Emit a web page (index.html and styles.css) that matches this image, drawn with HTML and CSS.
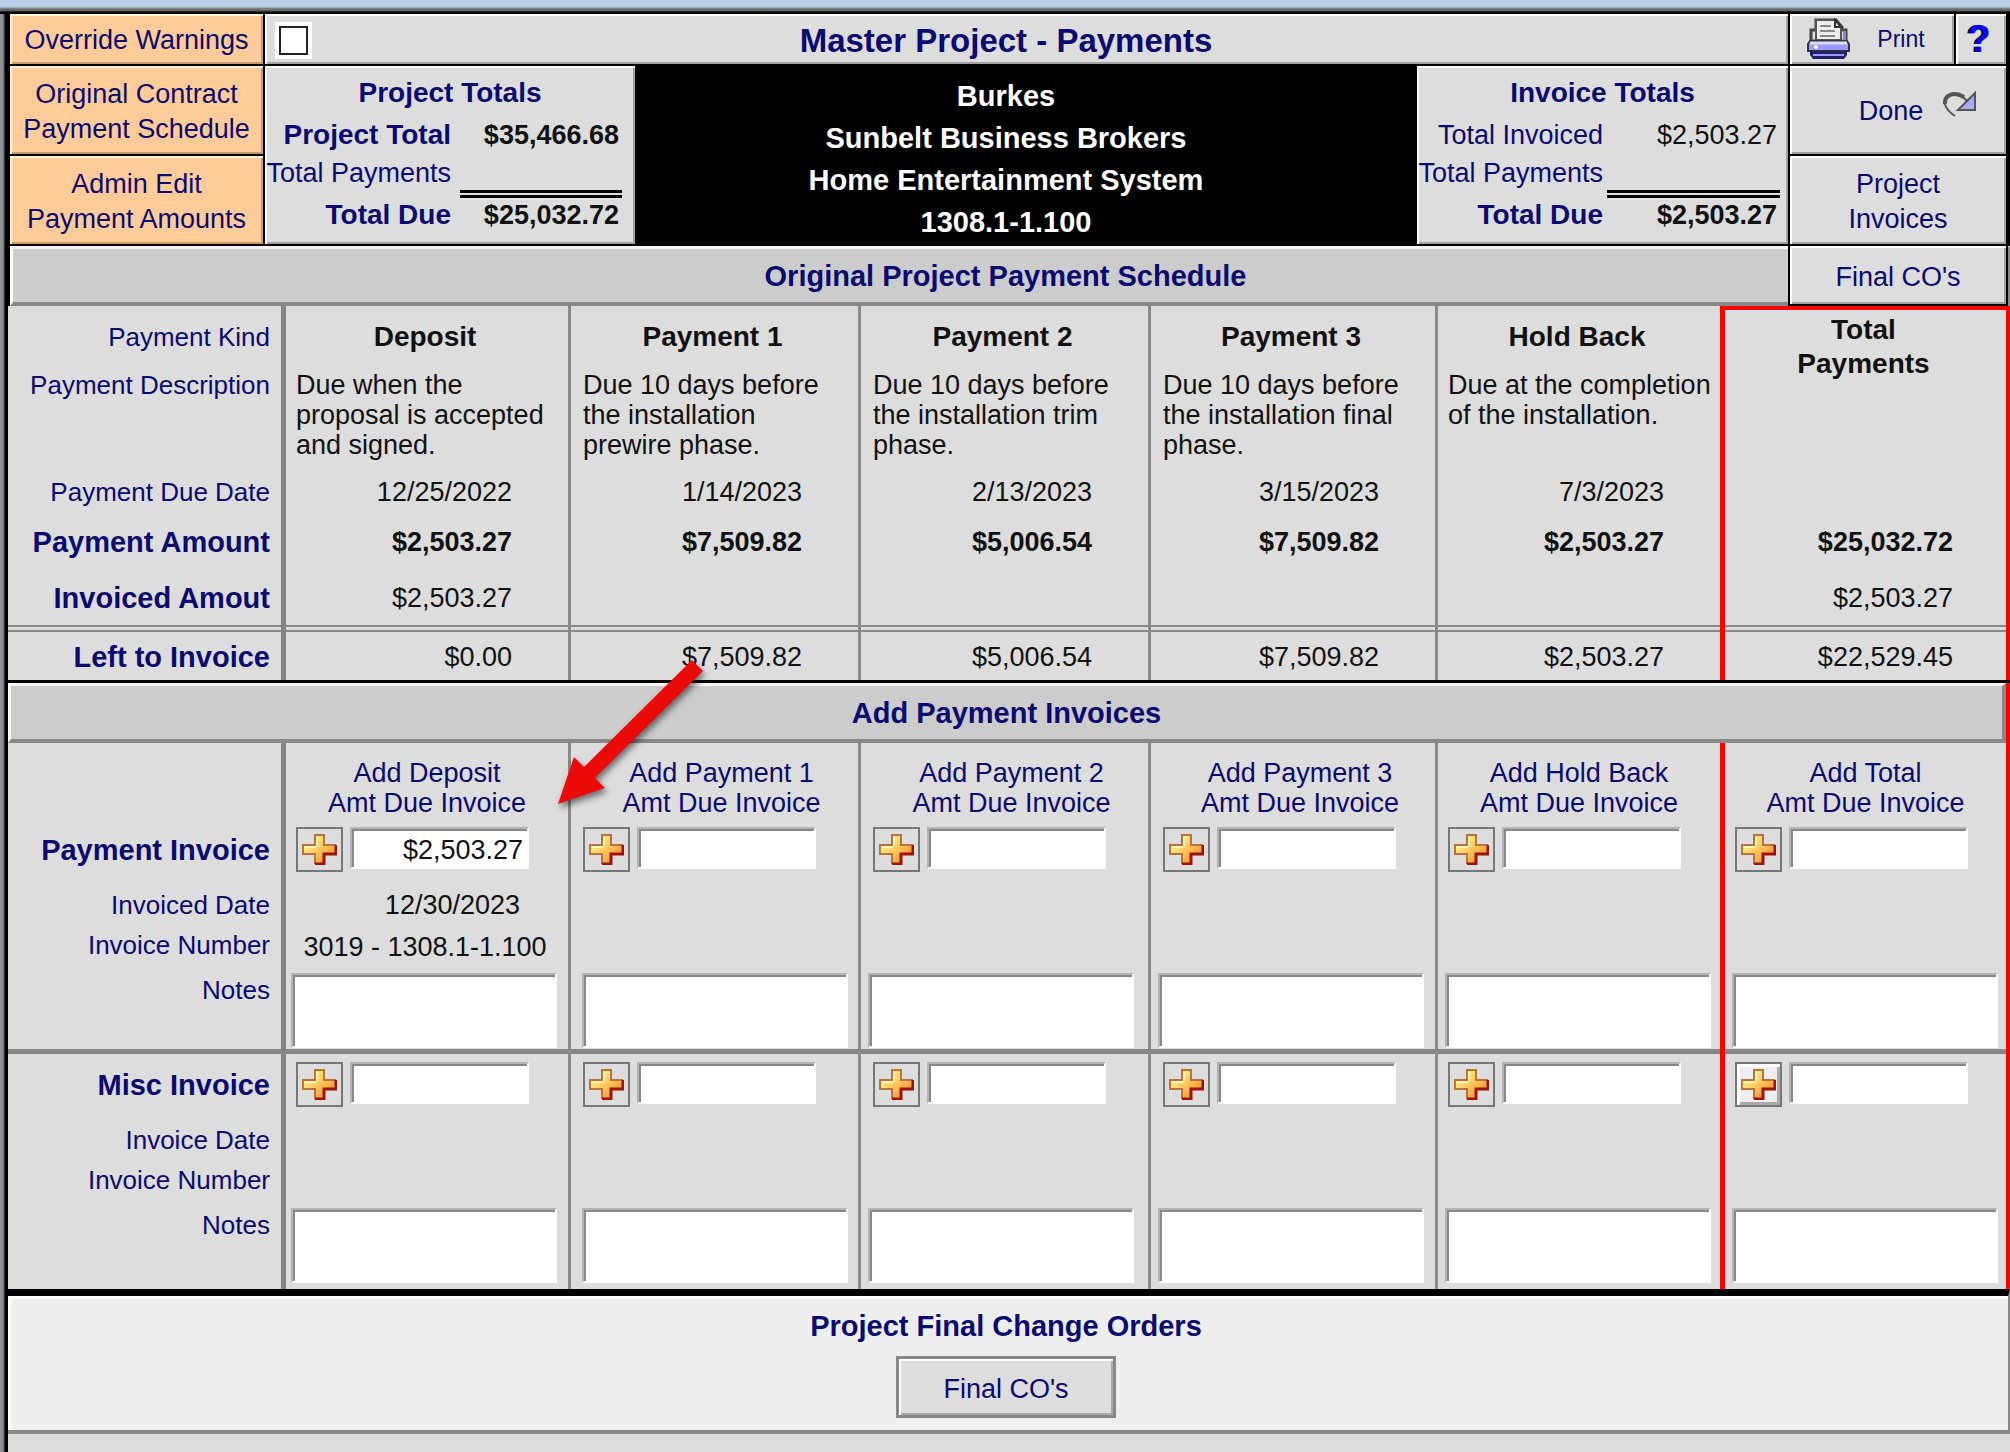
FILE: index.html
```html
<!DOCTYPE html>
<html lang="en">
<head>
<meta charset="utf-8">
<title>Master Project - Payments</title>
<link rel="stylesheet" href="styles.css">
</head>
<body>
<svg class="defs" aria-hidden="true">
  <defs>
    <linearGradient id="gold" x1="0" y1="0" x2="1" y2="1">
      <stop offset="0.2" stop-color="#fff08a"/>
      <stop offset="0.55" stop-color="#fbbf52"/>
      <stop offset="0.85" stop-color="#e8923a"/>
    </linearGradient>
    <symbol id="plus" viewBox="0 0 35 31">
      <path d="M13 1h9v10h12v9H22v10h-9V20H1v-9h12z" fill="url(#gold)"/>
      <path d="M13 30V20H1v-9h12V1h9v10h12" fill="none" stroke="#b9733a" stroke-width="2"/>
      <path d="M34 11v9H22v10h-9" fill="none" stroke="#a01208" stroke-width="3"/>
      <path d="M15 12V3M3 13h11" fill="none" stroke="#fff6b8" stroke-width="2"/>
    </symbol>
  </defs>
</svg>
<div class="window">
  <header class="top">
    <label class="cell orange" for="override">Override Warnings</label>
    <div class="cell titlebar">
      <input class="check" type="checkbox" id="override">
      <h1>Master Project - Payments</h1>
    </div>
    <button class="cell print" type="button">
      <svg width="43" height="42" viewBox="0 0 43 42" aria-hidden="true">
        <path d="M4 23V12h5V2h20l6 7v3h4v11z" fill="#ddd" stroke="#444" stroke-width="3"/>
        <path d="M9 22V2h19l6 7v13z" fill="#eee" stroke="#555" stroke-width="2"/>
        <path d="M28 2v7h6z" fill="#fff" stroke="#333" stroke-width="2"/>
        <path d="M13 8h11M13 13h15M13 18h15" stroke="#888" stroke-width="2"/>
        <path d="M36 13h3v9h-3z" fill="#88d"/>
        <path d="M3 23h37l2 3v7H1v-7z" fill="#99f" stroke="#334" stroke-width="2"/>
        <path d="M3 25h37" stroke="#ddf" stroke-width="3"/>
        <circle cx="9" cy="29" r="2" fill="#ffd"/>
        <path d="M3 33h37v4l-3 4H6l-3-4z" fill="#226"/>
        <path d="M6 37h31" stroke="#99f" stroke-width="2"/>
      </svg>
      Print
    </button>
    <button class="cell help" type="button">?</button>

    <button class="cell orange contract" type="button">Original Contract<br>Payment Schedule</button>
    <button class="cell orange admin" type="button">Admin Edit<br>Payment Amounts</button>
    <section class="cell totals project-totals">
      <h2>Project Totals</h2>
      <dl>
        <dt class="strong">Project Total</dt><dd class="strong">$35,466.68</dd>
        <dt>Total Payments</dt><dd class="rule"></dd>
        <dt class="strong">Total Due</dt><dd class="strong">$25,032.72</dd>
      </dl>
    </section>
    <div class="client">
      <div>Burkes</div>
      <div>Sunbelt Business Brokers</div>
      <div>Home Entertainment System</div>
      <div>1308.1-1.100</div>
    </div>
    <section class="cell totals invoice-totals">
      <h2>Invoice Totals</h2>
      <dl>
        <dt>Total Invoiced</dt><dd>$2,503.27</dd>
        <dt>Total Payments</dt><dd class="rule"></dd>
        <dt class="strong">Total Due</dt><dd class="strong">$2,503.27</dd>
      </dl>
    </section>
    <button class="cell done" type="button">Done
      <svg width="35" height="27" viewBox="0 0 35 27" aria-hidden="true">
        <path d="M13 25C5 20 0 12 4 6 9 1 17 1 25 10" fill="none" stroke="#555" stroke-width="2"/>
        <path d="M3 13C2 4 12 0 22 6" fill="none" stroke="#555" stroke-width="4"/>
        <path d="M33 2v17H16l8-8z" fill="#aaf" stroke="#555" stroke-width="2"/>
      </svg>
    </button>
    <button class="cell invoices" type="button">Project<br>Invoices</button>
    <h2 class="band schedule-band">Original Project Payment Schedule</h2>
    <button class="cell final" type="button">Final CO's</button>
  </header>

  <table class="grid">
    <colgroup><col class="c-label"><col class="c-dep"><col class="c-p1"><col class="c-p2"><col class="c-p3"><col class="c-hb"><col class="c-total"></colgroup>
    <tr class="kind">
      <th scope="row">Payment Kind</th>
      <th scope="col">Deposit</th><th scope="col">Payment 1</th><th scope="col">Payment 2</th><th scope="col">Payment 3</th><th scope="col">Hold Back</th>
      <th scope="col" rowspan="2" class="total-head">Total<br>Payments</th>
    </tr>
    <tr class="desc">
      <th scope="row">Payment Description</th>
      <td>Due when the<br>proposal is accepted<br>and signed.</td>
      <td>Due 10 days before<br>the installation<br>prewire phase.</td>
      <td>Due 10 days before<br>the installation trim<br>phase.</td>
      <td>Due 10 days before<br>the installation final<br>phase.</td>
      <td>Due at the completion<br>of the installation.</td>
    </tr>
    <tr class="due">
      <th scope="row">Payment Due Date</th>
      <td>12/25/2022</td><td>1/14/2023</td><td>2/13/2023</td><td>3/15/2023</td><td>7/3/2023</td><td></td>
    </tr>
    <tr class="amount strong">
      <th scope="row">Payment Amount</th>
      <td>$2,503.27</td><td>$7,509.82</td><td>$5,006.54</td><td>$7,509.82</td><td>$2,503.27</td><td>$25,032.72</td>
    </tr>
    <tr class="invoiced">
      <th scope="row" class="strong">Invoiced Amout</th>
      <td>$2,503.27</td><td></td><td></td><td></td><td></td><td>$2,503.27</td>
    </tr>
    <tr class="left">
      <th scope="row" class="strong">Left to Invoice</th>
      <td>$0.00</td><td>$7,509.82</td><td>$5,006.54</td><td>$7,509.82</td><td>$2,503.27</td><td>$22,529.45</td>
    </tr>
  </table>

  <div class="band-row"><h2 class="band">Add Payment Invoices</h2></div>

  <table class="grid entry">
    <colgroup><col class="c-label"><col class="c-dep"><col class="c-p1"><col class="c-p2"><col class="c-p3"><col class="c-hb"><col class="c-total"></colgroup>
    <tr class="add">
      <td></td>
      <th scope="col">Add Deposit<br>Amt Due Invoice</th>
      <th scope="col" class="shift">Add Payment 1<br>Amt Due Invoice</th>
      <th scope="col" class="shift">Add Payment 2<br>Amt Due Invoice</th>
      <th scope="col" class="shift">Add Payment 3<br>Amt Due Invoice</th>
      <th scope="col">Add Hold Back<br>Amt Due Invoice</th>
      <th scope="col">Add Total<br>Amt Due Invoice</th>
    </tr>
    <tr class="pay">
      <th scope="row" class="strong">Payment Invoice</th>
      <td><div class="field"><button class="plus" type="button" aria-label="Add deposit invoice"><svg><use href="#plus"/></svg></button><input type="text" aria-label="Deposit invoice amount" value="$2,503.27"></div></td>
      <td><div class="field"><button class="plus" type="button" aria-label="Add payment 1 invoice"><svg><use href="#plus"/></svg></button><input type="text" aria-label="Payment 1 invoice amount"></div></td>
      <td><div class="field"><button class="plus" type="button" aria-label="Add payment 2 invoice"><svg><use href="#plus"/></svg></button><input type="text" aria-label="Payment 2 invoice amount"></div></td>
      <td><div class="field"><button class="plus" type="button" aria-label="Add payment 3 invoice"><svg><use href="#plus"/></svg></button><input type="text" aria-label="Payment 3 invoice amount"></div></td>
      <td><div class="field"><button class="plus" type="button" aria-label="Add hold back invoice"><svg><use href="#plus"/></svg></button><input type="text" aria-label="Hold back invoice amount"></div></td>
      <td><div class="field"><button class="plus" type="button" aria-label="Add total invoice"><svg><use href="#plus"/></svg></button><input type="text" aria-label="Total invoice amount"></div></td>
    </tr>
    <tr class="date">
      <th scope="row">Invoiced Date</th>
      <td>12/30/2023</td><td></td><td></td><td></td><td></td><td></td>
    </tr>
    <tr class="number">
      <th scope="row">Invoice Number</th>
      <td>3019 - 1308.1-1.100</td><td></td><td></td><td></td><td></td><td></td>
    </tr>
    <tr class="notes ruled">
      <th scope="row">Notes</th>
      <td><textarea aria-label="Deposit notes"></textarea></td>
      <td><textarea aria-label="Payment 1 notes"></textarea></td>
      <td><textarea aria-label="Payment 2 notes"></textarea></td>
      <td><textarea aria-label="Payment 3 notes"></textarea></td>
      <td><textarea aria-label="Hold back notes"></textarea></td>
      <td><textarea aria-label="Total notes"></textarea></td>
    </tr>
    <tr class="pay">
      <th scope="row" class="strong">Misc Invoice</th>
      <td><div class="field"><button class="plus" type="button" aria-label="Add misc deposit invoice"><svg><use href="#plus"/></svg></button><input type="text" aria-label="Misc deposit amount"></div></td>
      <td><div class="field"><button class="plus" type="button" aria-label="Add misc payment 1 invoice"><svg><use href="#plus"/></svg></button><input type="text" aria-label="Misc payment 1 amount"></div></td>
      <td><div class="field"><button class="plus" type="button" aria-label="Add misc payment 2 invoice"><svg><use href="#plus"/></svg></button><input type="text" aria-label="Misc payment 2 amount"></div></td>
      <td><div class="field"><button class="plus" type="button" aria-label="Add misc payment 3 invoice"><svg><use href="#plus"/></svg></button><input type="text" aria-label="Misc payment 3 amount"></div></td>
      <td><div class="field"><button class="plus" type="button" aria-label="Add misc hold back invoice"><svg><use href="#plus"/></svg></button><input type="text" aria-label="Misc hold back amount"></div></td>
      <td><div class="field"><button class="plus raised" type="button" aria-label="Add misc total invoice"><svg><use href="#plus"/></svg></button><input type="text" aria-label="Misc total amount"></div></td>
    </tr>
    <tr class="date">
      <th scope="row">Invoice Date</th>
      <td></td><td></td><td></td><td></td><td></td><td></td>
    </tr>
    <tr class="number">
      <th scope="row">Invoice Number</th>
      <td></td><td></td><td></td><td></td><td></td><td></td>
    </tr>
    <tr class="notes">
      <th scope="row">Notes</th>
      <td><textarea aria-label="Misc deposit notes"></textarea></td>
      <td><textarea aria-label="Misc payment 1 notes"></textarea></td>
      <td><textarea aria-label="Misc payment 2 notes"></textarea></td>
      <td><textarea aria-label="Misc payment 3 notes"></textarea></td>
      <td><textarea aria-label="Misc hold back notes"></textarea></td>
      <td><textarea aria-label="Misc total notes"></textarea></td>
    </tr>
  </table>

  <section class="orders">
    <h2>Project Final Change Orders</h2>
    <button type="button">Final CO's</button>
  </section>
  <footer class="foot"></footer>

  <svg class="arrow" width="170" height="170" viewBox="0 0 170 170" aria-hidden="true">
    <path d="M8 154 24 107 34 117 142 10 153 21 45 128 55 138z" fill="#ea0a08"/>
  </svg>
</div>
</body>
</html>
```
FILE: styles.css
```css
* { box-sizing: border-box; }

body {
  margin: 0;
  font-family: "Liberation Sans", Arial, sans-serif;
  font-size: 27px;
  line-height: 30px;
  color: #111;
  background: #ddd;
}

h1, h2, dl, dd { margin: 0; }
h1, h2, th { color: #0a0a70; }
h2 { font-size: 29px; }
button, input, textarea { font: inherit; color: inherit; border-radius: 0; }
button { color: #0a0a70; }
.strong { font-weight: bold; }
.defs { position: absolute; width: 0; height: 0; }

.window {
  position: relative;
  display: flex;
  flex-direction: column;
  min-height: 100vh;
  padding: 14px 0 0 8px;
  background:
    linear-gradient(#b8cde8 7px, #8a8a8a 8px, #555 11px, #000 12px, #000 14px) top / 100% 14px no-repeat,
    linear-gradient(to right, #8d9599 2px, #6a6a6a 4px, #000 5px, #000 8px) left / 8px 100% no-repeat,
    #ddd;
}

/* Header */
.top {
  display: grid;
  grid-template-columns: 253px 370px 1fr 371px 164px 50px;
  grid-template-rows: 50px 88px 88px 60px;
  gap: 2px;
  padding: 0 4px 0 2px;
  background: #000;
}

.cell {
  display: flex;
  align-items: center;
  justify-content: center;
  padding: 2px 0 0;
  border: 0;
  color: #0a0a70;
  text-align: center;
  line-height: 35px;
  background: #ddd;
  box-shadow: inset 2px 2px #fff, inset -2px -2px #a0a0a0;
}

.orange {
  background: #fc9;
  box-shadow: inset 2px 2px #fff3d6, inset -2px -2px #c69a6c;
}

.contract { grid-area: 2 / 1; }
.admin { grid-area: 3 / 1; }
.contract, .admin, .invoices { padding-top: 4px; }
.titlebar { grid-area: 1 / 2 / 2 / 5; padding: 2px 84px 0 14px; }
.titlebar h1 { flex: 1; font-size: 33px; }

.check {
  appearance: none;
  width: 29px;
  height: 29px;
  margin: 0;
  border: 2px solid #222;
  background: #fff;
  outline: 4px solid #fff;
}

.print { gap: 27px; font-size: 23px; padding: 0 12px 0 0; }
.help { padding: 0 4px 0 0; font-size: 38px; font-weight: bold; color: #00f; text-shadow: -2px 0 #000; }
.done { grid-area: 2 / 5 / 3 / 7; gap: 19px; padding-left: 40px; }
.done svg { margin-bottom: 14px; }
.invoices { grid-area: 3 / 5 / 4 / 7; }
.final { grid-area: 4 / 5 / 5 / 7; margin-bottom: 2px; padding-top: 4px; outline: 2px solid #000; }

.totals { display: block; padding-top: 12px; line-height: 30px; }
.totals h2 { height: 42px; font-size: 28px; }
.totals dl { display: grid; grid-template-rows: 38px 42px auto; text-align: right; white-space: nowrap; }
.totals dt.strong { font-size: 28px; }
.totals dd { color: #111; padding-right: 3px; }
.totals .rule { height: 40px; border-bottom: 8px double #000; }
.project-totals { grid-area: 2 / 2 / 4 / 3; }
.project-totals dl { grid-template-columns: 1fr 162px; column-gap: 9px; padding-right: 13px; }
.invoice-totals { grid-area: 2 / 4 / 4 / 5; }
.invoice-totals dl { grid-template-columns: 1fr 173px; column-gap: 4px; padding-right: 8px; }

.client {
  grid-area: 2 / 3 / 4 / 4;
  padding: 9px 40px 0 0;
  color: #fff;
  font-size: 29px;
  font-weight: bold;
  line-height: 42px;
  text-align: center;
}

.band {
  display: flex;
  align-items: center;
  justify-content: center;
  height: 60px;
  background: #ccc;
  border: solid;
  border-width: 3px 4px 4px 3px;
  border-color: #f4f4f4 #888 #888 #fff;
}

.schedule-band { grid-area: 4 / 1 / 5 / 7; margin-right: -4px; padding-right: 8px; }
.band-row { padding-right: 4px; border-top: 3px solid #000; background: red; }

/* Payment grids */
.grid { width: 100%; table-layout: fixed; border-spacing: 0; background: #ddd; }
.c-label { width: 273px; }
.c-dep { width: 287px; }
.c-p1, .c-p2 { width: 290px; }
.c-p3 { width: 287px; }
.c-hb { width: 285px; }
.c-total { width: 290px; }

.grid td, .grid th { padding: 0; vertical-align: top; font-weight: normal; border-left: 3px solid #8a8a8a; white-space: nowrap; }
.grid td { padding-right: 56px; text-align: right; }
.grid tr > :nth-child(2) { border-left: 5px solid #858585; }
.grid tr > :nth-child(7) { border-left: 5px solid red; border-right: 4px solid red; padding-right: 53px; }
.grid tr > :first-child { border-left: 0; padding-right: 11px; text-align: right; font-size: 26px; }
.grid tr > .strong:first-child, .grid .strong > th:first-child { font-size: 29px; font-weight: bold; }
.grid .strong td { font-weight: bold; }

.kind { height: 64px; }
.grid .kind th { padding-top: 16px; }
.grid .kind th + th { padding-right: 4px; font-size: 28px; font-weight: bold; color: #111; }
.grid .kind .total-head { padding: 3px 4px 0 0; border-top: 4px solid red; line-height: 34px; }
.desc { height: 107px; }
.grid .desc td { padding: 0 0 0 12px; text-align: left; }
.due { height: 50px; }
.amount { height: 56px; }
.invoiced { height: 49px; }
.invoiced > * { background: linear-gradient(#888 2px, transparent 2px, transparent 5px, #888 5px) bottom / 100% 7px no-repeat; }
.left { height: 48px; }
.grid .left > * { padding-top: 10px; }

/* Invoice entry */
.add { height: 76px; }
.grid.entry .add th { padding: 15px 0 0; }
.grid.entry .add .shift { padding-left: 14px; }
.pay { height: 71px; }
.grid .pay th { padding-top: 16px; }
.grid.entry .pay td { padding: 8px 0 0 12px; }
.grid.entry tr.pay > :nth-child(2), .grid.entry tr.pay > :nth-child(6), .grid.entry tr.pay > :nth-child(7), .grid .desc td:nth-child(2), .grid .desc td:nth-child(6) { padding-left: 10px; }
.field { display: flex; gap: 7px; }

.plus {
  display: flex;
  align-items: center;
  justify-content: center;
  width: 47px;
  height: 45px;
  padding: 0;
  background: #ddd;
  border: 2px solid #777;
}
.plus svg { width: 35px; height: 31px; }
.raised { background: #eee; box-shadow: inset 3px 3px #fff, inset -3px -3px #aaa; }

.field input, textarea {
  display: block;
  border: 2px solid;
  border-color: #b4b4b4 #fff #fff #b4b4b4;
  background: #fff;
  box-shadow: inset 2px 2px #888;
}
.field input { width: 179px; height: 42px; padding: 4px 4px 0; text-align: right; }

.date { height: 40px; }
.grid .date td { padding-right: 48px; }
.number { height: 42px; }
.grid .number td { padding: 2px 4px 0 0; text-align: center; }
.notes { height: 82px; }
.grid .notes th { padding-top: 3px; }
.grid.entry .notes td { padding: 1px 7px 0; }
.grid.entry .notes td:nth-child(2) { padding-left: 5px; }
.grid.entry .notes td:nth-child(3) { padding-left: 11px; }
textarea { width: 266px; max-width: 100%; height: 75px; resize: none; }
.ruled > * { background: linear-gradient(#858585, #858585) bottom / 100% 5px no-repeat; }

.orders {
  display: flex;
  flex-direction: column;
  align-items: center;
  height: 145px;
  padding: 15px 4px 0 0;
  background: #eee;
  border: solid;
  border-width: 7px 2px 4px 0;
  border-color: #000 #888 #888;
  box-shadow: inset 3px 3px #fff;
}
.orders button {
  width: 220px;
  height: 62px;
  margin-top: 15px;
  padding: 3px 0 0;
  background: #ddd;
  border: 3px solid;
  border-color: #888;
  box-shadow: inset 2px 2px #fff, inset -2px -2px #aaa;
}
.foot { flex: 1; min-height: 16px; }

.arrow { position: absolute; left: 550px; top: 650px; filter: drop-shadow(2px 4px 3px rgba(0, 0, 0, 0.5)); pointer-events: none; }
```
